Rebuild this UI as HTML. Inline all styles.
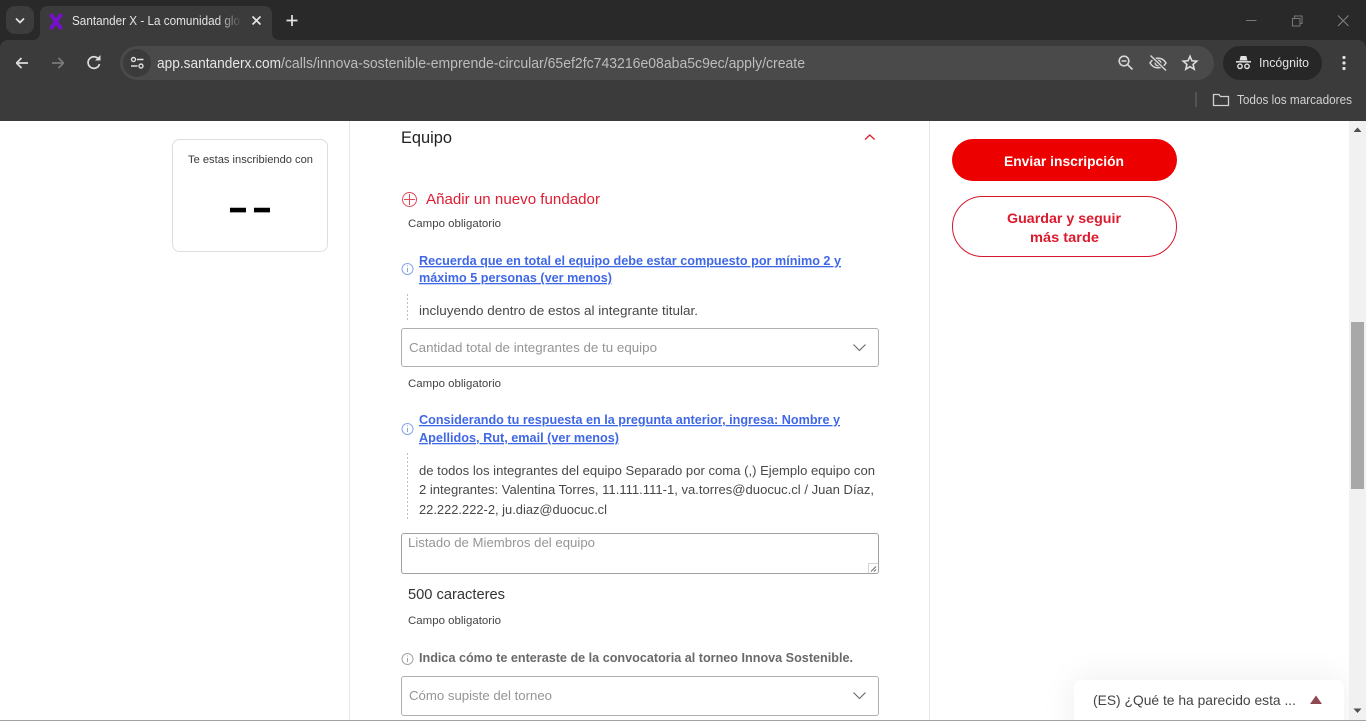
<!DOCTYPE html>
<html lang="es">
<head>
<meta charset="utf-8">
<title>Santander X</title>
<style>
html,body{margin:0;padding:0;width:1366px;height:721px;overflow:hidden;background:#fff}
svg{display:block;position:absolute;left:0;top:0}
text{font-family:"Liberation Sans",sans-serif;white-space:pre}
.ui{fill:#e3e3e3}
.body{fill:#484848;font-size:13px}
.req{fill:#444;font-size:11px}
.ph{fill:#959595;font-size:13px}
.lnk{fill:#4068e6;font-size:13px;font-weight:bold;text-decoration:underline}
</style>
</head>
<body>
<svg width="1366" height="721" viewBox="0 0 1366 721" xmlns="http://www.w3.org/2000/svg">
<defs>
<linearGradient id="fade" x1="0" x2="1" y1="0" y2="0"><stop offset="0" stop-color="#3b3b3b" stop-opacity="0"/><stop offset="1" stop-color="#3b3b3b"/></linearGradient>
<filter id="blur" x="-20%" y="-100%" width="140%" height="300%"><feGaussianBlur stdDeviation="18"/></filter>
<clipPath id="pageclip"><rect x="930" y="121" width="419" height="599"/></clipPath>
</defs>

<!-- Browser frame -->
<rect width="1366" height="50" fill="#292929"/>
<rect x="6" y="6" width="28" height="28" rx="9" fill="#3c3c3c"/>
<path d="M16 18.500l4 4 4-4" fill="none" stroke="#e3e3e3" stroke-width="1.800"/>
<path d="M32 40c5 0 8-2 8-8V14c0-5 3-8 8-8h216c5 0 8 3 8 8v18c0 6 3 8 8 8z" fill="#3b3b3b"/>
<path d="M50.500 14L61.500 29M61.500 14L50.500 29" stroke="#7510cc" stroke-width="3.800" fill="none"/>
<text x="72" y="25" font-size="13" class="ui" textLength="168" lengthAdjust="spacingAndGlyphs">Santander X - La comunidad glo</text>
<rect x="218" y="10" width="24" height="22" fill="url(#fade)"/>
<path d="M252.500 16.500l8 8M260.500 16.500l-8 8" stroke="#e3e3e3" stroke-width="1.700" fill="none"/>
<path d="M292 15v11M286.500 20.500h11" stroke="#e3e3e3" stroke-width="1.700" fill="none"/>
<path d="M1246 20.500h10.500" stroke="#777" fill="none"/>
<path d="M1292.500 18.500h7.500v7.500h-7.500zM1294.500 18v-2h7.500v7.500h-2" stroke="#777" fill="none"/>
<path d="M1338 15.500l10.500 10.500M1348.500 15.500l-10.500 10.500" stroke="#858585" fill="none"/>

<path d="M0 121V48a8 8 0 0 1 8-8h1350a8 8 0 0 1 8 8v73z" fill="#3b3b3b"/>
<path d="M16 63h12M16.500 63l5-5M16.500 63l5 5" stroke="#dcdcdc" stroke-width="1.700" fill="none"/>
<path d="M52 63h12M63.500 63l-5-5M63.500 63l-5 5" stroke="#7a7a7a" stroke-width="1.700" fill="none"/>
<path d="M98.500 59a5.800 5.800 0 1 0 1 5" stroke="#dcdcdc" stroke-width="1.700" fill="none"/>
<path d="M95 60.500h5.500V55z" fill="#dcdcdc"/>

<rect x="120" y="46" width="1094" height="34" rx="17" fill="#4a4a4a"/>
<circle cx="137" cy="63" r="14" fill="#3b3b3b"/>
<circle cx="133.500" cy="59.500" r="2" fill="none" stroke="#dedede" stroke-width="1.400"/>
<path d="M137 59.500h6.500M131 66h6.500" stroke="#dedede" stroke-width="1.500" fill="none"/>
<circle cx="141" cy="66" r="2" fill="none" stroke="#dedede" stroke-width="1.400"/>
<text x="157" y="68" font-size="14.500" fill="#e6e6e6" textLength="124" lengthAdjust="spacingAndGlyphs">app.santanderx.com</text>
<text x="281" y="68" font-size="14.500" fill="#bdbdbd" textLength="524" lengthAdjust="spacingAndGlyphs">/calls/innova-sostenible-emprende-circular/65ef2fc743216e08aba5c9ec/apply/create</text>
<circle cx="1124" cy="61" r="4.800" fill="none" stroke="#d6d6d6" stroke-width="1.600"/>
<path d="M1121.500 61h5M1127.500 64.500l5 5" stroke="#d6d6d6" stroke-width="1.600" fill="none"/>
<path d="M1150 63c4-6.500 12-6.500 16 0c-4 6.500-12 6.500-16 0z" fill="none" stroke="#d6d6d6" stroke-width="1.500"/>
<circle cx="1158" cy="63" r="2.800" fill="none" stroke="#d6d6d6" stroke-width="1.400"/>
<path d="M1151 56.500l15 13.500" stroke="#4a4a4a" stroke-width="3.500" fill="none"/>
<path d="M1150.500 55.500l15.500 15" stroke="#d6d6d6" stroke-width="1.500" fill="none"/>
<path d="M1190 56.300l1.900 4.500 4.900.4-3.700 3.200 1.100 4.800-4.200-2.500-4.200 2.500 1.100-4.800-3.700-3.200 4.900-.4z" fill="none" stroke="#dcdcdc" stroke-width="1.600"/>

<rect x="1223" y="46" width="99" height="34" rx="17" fill="#272727"/>
<path d="M1239.500 60.500l1.200-4.500h5.600l1.200 4.500z" fill="#e3e3e3"/>
<path d="M1236 61.800h15" stroke="#e3e3e3" stroke-width="1.500" fill="none"/>
<circle cx="1240" cy="66.300" r="2.200" fill="none" stroke="#e3e3e3" stroke-width="1.400"/>
<circle cx="1247" cy="66.300" r="2.200" fill="none" stroke="#e3e3e3" stroke-width="1.400"/>
<text x="1259" y="67" font-size="13" fill="#e3e3e3" textLength="50" lengthAdjust="spacingAndGlyphs">Incógnito</text>
<circle cx="1344" cy="57.500" r="1.600" fill="#e3e3e3"/><circle cx="1344" cy="63" r="1.600" fill="#e3e3e3"/><circle cx="1344" cy="68.500" r="1.600" fill="#e3e3e3"/>

<path d="M1196 92v15" stroke="#6b6b6b" fill="none"/>
<path d="M1213.500 105.500v-11h5.500l1.500 2h8v9z" fill="none" stroke="#d0d0d0" stroke-width="1.300"/>
<text x="1237" y="104" font-size="12.500" fill="#d2d2d2" textLength="115" lengthAdjust="spacingAndGlyphs">Todos los marcadores</text>

<!-- Page -->
<rect y="121" width="1366" height="600" fill="#fff"/>
<path d="M349.500 121v599M929.500 121v599" stroke="#e6e6e6" fill="none"/>

<rect x="172.500" y="139.500" width="155" height="112" rx="7" fill="#fff" stroke="#d9dedf"/>
<text x="188" y="163" font-size="11" fill="#3a3a3a" textLength="125" lengthAdjust="spacingAndGlyphs">Te estas inscribiendo con</text>
<text x="230" y="218" font-size="29" font-weight="bold" fill="#000" stroke="#000" stroke-width="1.800" textLength="40" lengthAdjust="spacingAndGlyphs">– –</text>

<text x="401" y="143" font-size="16.500" fill="#222" textLength="51" lengthAdjust="spacingAndGlyphs">Equipo</text>
<path d="M865 139.500l4.800-4.500 4.800 4.500" fill="none" stroke="#e0192d" stroke-width="1.300"/>

<circle cx="409.500" cy="199.500" r="7" fill="none" stroke="#e0485a" stroke-width="1"/>
<path d="M404 199.500h11M409.500 194v11" stroke="#e0485a" stroke-width="1" fill="none"/>
<text x="426" y="204" font-size="15" fill="#dd1c30" textLength="174" lengthAdjust="spacingAndGlyphs">Añadir un nuevo fundador</text>
<text x="408" y="227" class="req" textLength="93" lengthAdjust="spacingAndGlyphs">Campo obligatorio</text>

<circle cx="407.500" cy="269" r="5.500" fill="none" stroke="#8aa5e8"/>
<path d="M407.500 268v4M407.500 265.500v1" stroke="#8aa5e8" fill="none"/>
<text x="419" y="265" class="lnk" textLength="422" lengthAdjust="spacingAndGlyphs">Recuerda que en total el equipo debe estar compuesto por mínimo 2 y</text>
<text x="419" y="282" class="lnk" textLength="193" lengthAdjust="spacingAndGlyphs">máximo 5 personas (ver menos)</text>
<path d="M407.500 294v26" stroke="#bdbdbd" stroke-dasharray="2 2" fill="none"/>
<text x="419" y="315" class="body" textLength="279" lengthAdjust="spacingAndGlyphs">incluyendo dentro de estos al integrante titular.</text>

<rect x="401.500" y="328.500" width="477" height="38" rx="2.500" fill="#fff" stroke="#b0b0b0"/>
<text x="409" y="352" class="ph" textLength="248" lengthAdjust="spacingAndGlyphs">Cantidad total de integrantes de tu equipo</text>
<path d="M853.500 344.500l6 6 6-6" fill="none" stroke="#666" stroke-width="1.100"/>
<text x="408" y="387" class="req" textLength="93" lengthAdjust="spacingAndGlyphs">Campo obligatorio</text>

<circle cx="407.500" cy="429" r="5.500" fill="none" stroke="#8aa5e8"/>
<path d="M407.500 428v4M407.500 425.500v1" stroke="#8aa5e8" fill="none"/>
<text x="419" y="424" class="lnk" textLength="421" lengthAdjust="spacingAndGlyphs">Considerando tu respuesta en la pregunta anterior, ingresa: Nombre y</text>
<text x="419" y="442" class="lnk" textLength="200" lengthAdjust="spacingAndGlyphs">Apellidos, Rut, email (ver menos)</text>
<path d="M407.500 453v67" stroke="#bdbdbd" stroke-dasharray="2 2" fill="none"/>
<text x="419" y="475" class="body" textLength="456" lengthAdjust="spacingAndGlyphs">de todos los integrantes del equipo Separado por coma (,) Ejemplo equipo con</text>
<text x="419" y="494" class="body" textLength="455" lengthAdjust="spacingAndGlyphs">2 integrantes: Valentina Torres, 11.111.111-1, va.torres@duocuc.cl / Juan Díaz,</text>
<text x="419" y="514" class="body" textLength="188" lengthAdjust="spacingAndGlyphs">22.222.222-2, ju.diaz@duocuc.cl</text>

<rect x="401.500" y="533.500" width="477" height="40" rx="2.500" fill="#fff" stroke="#a0a0a0"/>
<text x="408" y="547" class="ph" textLength="187" lengthAdjust="spacingAndGlyphs">Listado de Miembros del equipo</text>
<path d="M868.500 573v-9.500h9.500" fill="none" stroke="#d5d5d5"/>
<path d="M871 571.500l5-5M874 571.500l2-2" stroke="#666" stroke-width=".9" fill="none"/>
<text x="408" y="599" font-size="14.500" fill="#333" textLength="97" lengthAdjust="spacingAndGlyphs">500 caracteres</text>
<text x="408" y="624" class="req" textLength="93" lengthAdjust="spacingAndGlyphs">Campo obligatorio</text>

<circle cx="407.500" cy="659" r="5.500" fill="none" stroke="#a5a5a5"/>
<path d="M407.500 658v4M407.500 655.500v1" stroke="#a5a5a5" fill="none"/>
<text x="419" y="662" font-size="13" font-weight="bold" fill="#696969" textLength="434" lengthAdjust="spacingAndGlyphs">Indica cómo te enteraste de la convocatoria al torneo Innova Sostenible.</text>

<rect x="401.500" y="676.500" width="477" height="39" rx="2.500" fill="#fff" stroke="#b0b0b0"/>
<text x="409" y="700" class="ph" textLength="143" lengthAdjust="spacingAndGlyphs">Cómo supiste del torneo</text>
<path d="M853.500 692.500l6 6 6-6" fill="none" stroke="#666" stroke-width="1.100"/>

<rect x="952" y="139" width="225" height="42" rx="21" fill="#ec0000"/>
<text x="1004" y="166" font-size="14" font-weight="bold" fill="#fff" textLength="120" lengthAdjust="spacingAndGlyphs">Enviar inscripción</text>
<rect x="952.500" y="196.500" width="224" height="60" rx="30" fill="#fff" stroke="#d5182c"/>
<text x="1007" y="223" font-size="14" font-weight="bold" fill="#dc1a2e" textLength="114" lengthAdjust="spacingAndGlyphs">Guardar y seguir</text>
<text x="1030" y="242" font-size="14" font-weight="bold" fill="#dc1a2e" textLength="69" lengthAdjust="spacingAndGlyphs">más tarde</text>

<!-- Feedback widget -->
<g clip-path="url(#pageclip)"><rect x="1074" y="680" width="270" height="60" fill="#000" opacity=".07" filter="url(#blur)"/></g>
<path d="M1074 720v-32a8 8 0 0 1 8-8h254a8 8 0 0 1 8 8v32z" fill="#fff"/>
<text x="1093" y="705" font-size="14" fill="#444" textLength="203" lengthAdjust="spacingAndGlyphs">(ES) ¿Qué te ha parecido esta ...</text>
<path d="M1316 695.500l6 8.500h-12z" fill="#8e4a50"/>

<!-- Scrollbar -->
<rect x="1349" y="121" width="17" height="600" fill="#f1f1f1"/>
<rect x="1351" y="322" width="13" height="167" fill="#a8a8a8"/>
<path d="M1357.500 127.500l4 4.500h-8z" fill="#505050"/>
<path d="M1353.500 708.500h8l-4 4.500z" fill="#505050"/>
<rect y="720" width="1366" height="1" fill="#a2a2a2"/>
</svg>
</body>
</html>
